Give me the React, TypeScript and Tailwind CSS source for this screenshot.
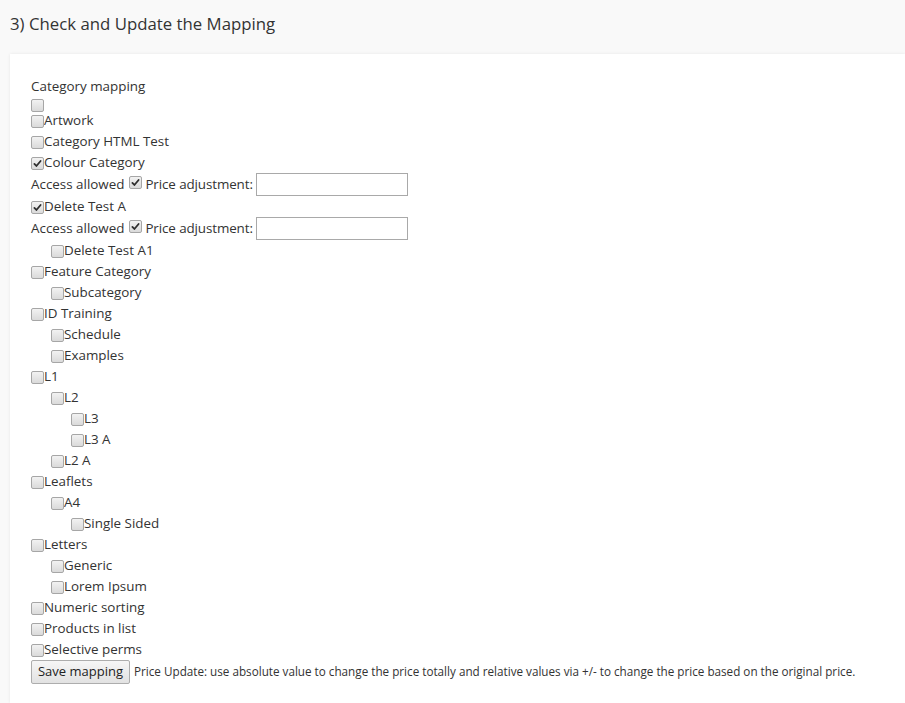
import React from "react";

const Box = ({ checked = false }: { checked?: boolean }) => (
  <span className="inline-block w-[13px] h-[13px] shrink-0 rounded-[2px] border border-[#a6a6a6] bg-gradient-to-b from-[#f2f2f2] to-[#dadada] relative">
    {checked && (
      <svg viewBox="0 0 13 13" className="absolute -left-px -top-px w-[13px] h-[13px]">
        <path d="M3.4 6.9 L5.4 9 L9.6 4" fill="none" stroke="#2e2e2e" strokeWidth="1.8" strokeLinecap="round" strokeLinejoin="round" />
      </svg>
    )}
  </span>
);

const Row = ({ label, level = 0, checked = false }: { label: string; level?: number; checked?: boolean }) => (
  <div className="flex items-start h-[21px] leading-[21px]" style={{ paddingLeft: level * 20 }}>
    <span className="mt-[3px]"><Box checked={checked} /></span>
    <span>{label}</span>
  </div>
);

const Access = () => (
  <div className="flex items-center h-[23px] whitespace-pre">
    <span>Access allowed</span>
    <span className="ml-[5px] mr-[3px]"><Box checked /></span>
    <span className="tracking-[-0.1px]">Price adjustment:</span>
    <span className="ml-[3px] w-[152px] h-[23px] border border-[#a9a9a9] bg-white" />
  </div>
);

export default function App() {
  return (
    <div className="min-h-[703px] bg-[#f9f9f9] text-[#333] font-['Open_Sans',sans-serif] flex flex-col">
      <div className="h-[54px] flex items-center pl-[10px] pb-[6px] text-[16.8px] text-[#333]">
        3) Check and Update the Mapping
      </div>
      <div className="flex-1 ml-[10px] bg-white shadow-[0_0_3px_rgba(0,0,0,0.08)] pl-[21px] pt-[22px] text-[13.4px]">
        <div className="h-[21px] leading-[21px]">Category mapping</div>
        <div className="h-[13px]"><Box /></div>
        <Row label="Artwork" />
        <Row label="Category HTML Test" />
        <Row label="Colour Category" checked />
        <Access />
        <Row label="Delete Test A" checked />
        <Access />
        <Row label="Delete Test A1" level={1} />
        <Row label="Feature Category" />
        <Row label="Subcategory" level={1} />
        <Row label="ID Training" />
        <Row label="Schedule" level={1} />
        <Row label="Examples" level={1} />
        <Row label="L1" />
        <Row label="L2" level={1} />
        <Row label="L3" level={2} />
        <Row label="L3 A" level={2} />
        <Row label="L2 A" level={1} />
        <Row label="Leaflets" />
        <Row label="A4" level={1} />
        <Row label="Single Sided" level={2} />
        <Row label="Letters" />
        <Row label="Generic" level={1} />
        <Row label="Lorem Ipsum" level={1} />
        <Row label="Numeric sorting" />
        <Row label="Products in list" />
        <Row label="Selective perms" />
        <div className="flex items-center h-[24px]">
          <button className="h-[24px] w-[99px] border border-[#adadad] rounded-[2px] bg-gradient-to-b from-[#f6f6f6] to-[#e2e2e2] text-[13px] text-[#222]">
            Save mapping
          </button>
          <span className="ml-[4px] text-[11.7px]">
            Price Update: use absolute value to change the price totally and relative values via +/- to change the price based on the original price.
          </span>
        </div>
      </div>
    </div>
  );
}
